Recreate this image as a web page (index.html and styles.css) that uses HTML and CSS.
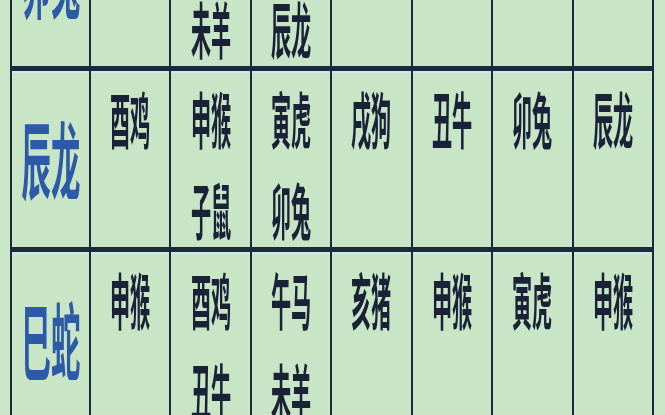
FILE: index.html
```html
<!DOCTYPE html>
<html lang="zh">
<head>
<meta charset="utf-8">
<title>生肖表</title>
<link rel="stylesheet" href="styles.css">
</head>
<body>
<div class="sheet">
  <div class="row">
    <div class="cell head"><span class="h">卯兔</span></div>
    <div class="cell"></div>
    <div class="cell"><div class="ln"></div><div class="ln"><span class="t">未羊</span></div></div>
    <div class="cell"><div class="ln"></div><div class="ln"><span class="t">辰龙</span></div></div>
    <div class="cell"></div>
    <div class="cell"></div>
    <div class="cell"></div>
    <div class="cell"></div>
  </div>
  <div class="row">
    <div class="cell head"><span class="h">辰龙</span></div>
    <div class="cell"><div class="ln"><span class="t">酉鸡</span></div></div>
    <div class="cell"><div class="ln"><span class="t">申猴</span></div><div class="ln"><span class="t">子鼠</span></div></div>
    <div class="cell"><div class="ln"><span class="t">寅虎</span></div><div class="ln"><span class="t">卯兔</span></div></div>
    <div class="cell"><div class="ln"><span class="t">戌狗</span></div></div>
    <div class="cell"><div class="ln"><span class="t">丑牛</span></div></div>
    <div class="cell"><div class="ln"><span class="t">卯兔</span></div></div>
    <div class="cell"><div class="ln"><span class="t">辰龙</span></div></div>
  </div>
  <div class="row">
    <div class="cell head"><span class="h">巳蛇</span></div>
    <div class="cell"><div class="ln"><span class="t">申猴</span></div></div>
    <div class="cell"><div class="ln"><span class="t">酉鸡</span></div><div class="ln"><span class="t">丑牛</span></div></div>
    <div class="cell"><div class="ln"><span class="t">午马</span></div><div class="ln"><span class="t">未羊</span></div></div>
    <div class="cell"><div class="ln"><span class="t">亥猪</span></div></div>
    <div class="cell"><div class="ln"><span class="t">申猴</span></div></div>
    <div class="cell"><div class="ln"><span class="t">寅虎</span></div></div>
    <div class="cell"><div class="ln"><span class="t">申猴</span></div></div>
  </div>
</div>
</body>
</html>
```
FILE: styles.css
```css
html, body {
  margin: 0;
  padding: 0;
}
body {
  width: 665px;
  height: 415px;
  overflow: hidden;
  background: #c9e6c6;
  font-family: "Noto Sans CJK SC", "Noto Sans CJK JP", sans-serif;
}
.sheet {
  margin: -110px 0 0 10px;
  width: 644px;
  box-sizing: border-box;
  padding: 0 2px;
  display: flex;
  flex-direction: column;
  gap: 5px;
  background: #1a2a3c;
}
.row {
  display: grid;
  grid-template-columns: 77px repeat(7, 1fr);
  grid-template-rows: 176px;
  column-gap: 2px;
  height: 176px;
}
.cell {
  background: #c8e5c5;
  box-shadow: inset 0 3px 2px -1px #d3e9e6;
  display: flex;
  flex-direction: column;
  align-items: center;
  min-width: 0;
  min-height: 0;
  padding-top: 1px;
}
.cell.head {
  justify-content: center;
  padding-top: 0;
  padding-bottom: 4px;
}
.ln {
  height: 91px;
  flex: none;
  display: flex;
  justify-content: center;
}
.t {
  display: block;
  flex: none;
  font-size: 61px;
  line-height: 92px;
  font-weight: 700;
  color: #1a2238;
  white-space: nowrap;
  transform: scaleX(0.33);
  filter: blur(0.6px);
}
.h {
  display: block;
  flex: none;
  font-size: 84px;
  line-height: 100px;
  font-weight: 700;
  color: #2c5aa6;
  white-space: nowrap;
  transform: scaleX(0.35);
  filter: blur(0.7px);
}
```
